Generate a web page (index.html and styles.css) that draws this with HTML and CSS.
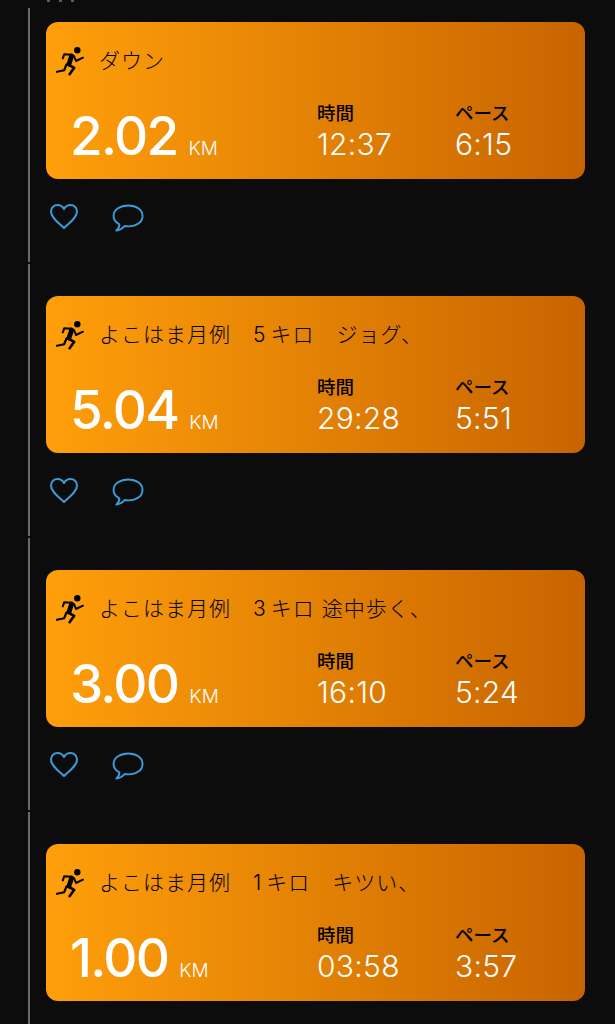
FILE: index.html
```html
<!DOCTYPE html>
<html lang="ja">
<head>
  <meta charset="utf-8">
  <meta name="viewport" content="width=device-width, initial-scale=1">
  <title>ランニング記録</title>
  <link rel="stylesheet" href="styles.css">
</head>
<body>
  <svg class="icon-defs" aria-hidden="true">
    <symbol id="runner" viewBox="0 0 28 30">
      <circle cx="21.3" cy="4.3" r="3.2" fill="#000"/>
      <g fill="none" stroke="#000" stroke-linecap="round" stroke-linejoin="round">
        <path d="M15.6 10 L13 18" stroke-width="4.8"/>
        <path d="M15.7 8.8 L8.2 8.3 L6.8 12.3" stroke-width="2"/>
        <path d="M18 10 L20 15 L27 11.7" stroke-width="2"/>
        <path d="M13 19 L18.2 21.8 L13.6 28.2" stroke-width="2.6"/>
        <path d="M10.5 18.5 L8.2 24.2 L1 25.8" stroke-width="2.2"/>
      </g>
    </symbol>
    <symbol id="heart" viewBox="0 0 30 27">
      <path d="M15 25 C10 20 2 15 2 8.5 C2 4.5 5 2 8.5 2 C11.2 2 13.6 3.4 15 6 C16.4 3.4 18.8 2 21.5 2 C25 2 28 4.5 28 8.5 C28 15 20 20 15 25 Z" fill="none" stroke="currentColor" stroke-width="2" stroke-linejoin="round"/>
    </symbol>
    <symbol id="bubble" viewBox="0 0 33 31">
      <path d="M16.8 2 C24.8 2 31.5 6.2 31.5 12.8 C31.5 19.4 24.8 23.6 17.5 23.6 C15.8 23.6 14.6 23.5 13.2 23.2 C11.2 25.4 7.8 27.8 4.5 28 C6.4 26.4 7.6 24.2 7.6 21.6 C4 19.6 1.6 16.6 1.6 12.8 C1.6 6.2 8.8 2 16.8 2 Z" fill="none" stroke="currentColor" stroke-width="2" stroke-linejoin="round"/>
    </symbol>
  </svg>

  <div class="top-dots"><span></span><span></span><span></span></div>

  <div class="feed">
    <article class="entry">
      <div class="card">
        <div class="card-title">
          <svg class="runner"><use href="#runner"/></svg>
          <span class="title-text">ダウン</span>
        </div>
        <div class="card-stats">
          <div class="distance"><span class="distance-value">2.02</span><span class="distance-unit">KM</span></div>
          <div class="stat stat-time"><span class="stat-label">時間</span><span class="stat-value">12:37</span></div>
          <div class="stat"><span class="stat-label">ペース</span><span class="stat-value">6:15</span></div>
        </div>
      </div>
      <div class="actions">
        <svg class="heart"><use href="#heart"/></svg>
        <svg class="bubble"><use href="#bubble"/></svg>
      </div>
    </article>

    <article class="entry">
      <div class="card">
        <div class="card-title">
          <svg class="runner"><use href="#runner"/></svg>
          <span class="title-text">よこはま月例　<span class="title-num">5</span>キロ　ジョグ、</span>
        </div>
        <div class="card-stats">
          <div class="distance"><span class="distance-value">5.04</span><span class="distance-unit">KM</span></div>
          <div class="stat stat-time"><span class="stat-label">時間</span><span class="stat-value">29:28</span></div>
          <div class="stat"><span class="stat-label">ペース</span><span class="stat-value">5:51</span></div>
        </div>
      </div>
      <div class="actions">
        <svg class="heart"><use href="#heart"/></svg>
        <svg class="bubble"><use href="#bubble"/></svg>
      </div>
    </article>

    <article class="entry">
      <div class="card">
        <div class="card-title">
          <svg class="runner"><use href="#runner"/></svg>
          <span class="title-text">よこはま月例　<span class="title-num">3</span>キロ 途中歩く、</span>
        </div>
        <div class="card-stats">
          <div class="distance"><span class="distance-value">3.00</span><span class="distance-unit">KM</span></div>
          <div class="stat stat-time"><span class="stat-label">時間</span><span class="stat-value">16:10</span></div>
          <div class="stat"><span class="stat-label">ペース</span><span class="stat-value">5:24</span></div>
        </div>
      </div>
      <div class="actions">
        <svg class="heart"><use href="#heart"/></svg>
        <svg class="bubble"><use href="#bubble"/></svg>
      </div>
    </article>

    <article class="entry">
      <div class="card">
        <div class="card-title">
          <svg class="runner"><use href="#runner"/></svg>
          <span class="title-text">よこはま月例　<span class="title-num">1</span>キロ　キツい、</span>
        </div>
        <div class="card-stats">
          <div class="distance"><span class="distance-value">1.00</span><span class="distance-unit">KM</span></div>
          <div class="stat stat-time"><span class="stat-label">時間</span><span class="stat-value">03:58</span></div>
          <div class="stat"><span class="stat-label">ペース</span><span class="stat-value">3:57</span></div>
        </div>
      </div>
    </article>
  </div>
</body>
</html>
```

FILE: styles.css
```css
html,
body {
  height: 100%;
}

body {
  margin: 0;
  overflow: hidden;
  background-color: #0c0c0d;
  font-family: Inter, "Noto Sans CJK JP", sans-serif;
  color: #000;
}

.icon-defs {
  display: none;
}

.top-dots {
  display: flex;
  gap: 9px;
  height: 2px;
  padding-left: 47px;
}

.top-dots span {
  width: 3px;
  height: 2px;
  background-color: #5c5c5e;
}

.feed {
  display: flex;
  flex-direction: column;
  gap: 2px;
  height: 1016px;
  overflow: hidden;
  padding: 6px 30px 0 28px;
}

.entry {
  height: 272px;
  flex-shrink: 0;
  box-sizing: border-box;
  padding: 32px 0 0 16px;
  border-left: 2px solid #6a6a6c;
}

.entry:first-child {
  height: 254px;
  padding-top: 14px;
}

.card {
  box-sizing: border-box;
  height: 157px;
  padding: 25px 0 0 10px;
  border-radius: 12px;
  background: linear-gradient(90deg, #ff9f0a 0%, #c86400 100%);
}

.card-title {
  display: flex;
  align-items: center;
  height: 28px;
}

.runner {
  width: 28px;
  height: 30px;
  flex-shrink: 0;
}

.title-text {
  margin-left: 15px;
  font-family: Inter, "Noto Sans CJK JP", sans-serif;
  font-size: 21px;
  font-weight: 300;
  line-height: 28px;
  letter-spacing: 1px;
  white-space: nowrap;
  color: #000;
}

.title-num {
  margin-right: 4px;
}

.card-stats {
  display: flex;
  align-items: flex-end;
  margin-top: 24px;
  padding-left: 14px;
}

.distance {
  display: flex;
  align-items: baseline;
  width: 247px;
  color: #fff;
}

.distance-value {
  font-size: 53px;
  font-weight: 500;
  line-height: 52px;
  letter-spacing: -1.7px;
}

.distance-unit {
  margin-left: 11px;
  font-size: 19px;
  font-weight: 300;
}

.stat {
  display: flex;
  flex-direction: column;
}

.stat-time {
  width: 138px;
}

.stat-label {
  font-family: "Noto Sans CJK JP", sans-serif;
  font-size: 18.5px;
  font-weight: 500;
  line-height: 27px;
}

.stat-value {
  font-size: 30px;
  font-weight: 300;
  line-height: 36px;
  letter-spacing: 0.3px;
  color: #fff;
}

.actions {
  display: flex;
  align-items: flex-start;
  gap: 33px;
  margin-top: 24px;
  padding-left: 3px;
  color: #3d9bd6;
}

.heart {
  width: 30px;
  height: 27px;
}

.bubble {
  width: 32px;
  height: 31px;
}
```
